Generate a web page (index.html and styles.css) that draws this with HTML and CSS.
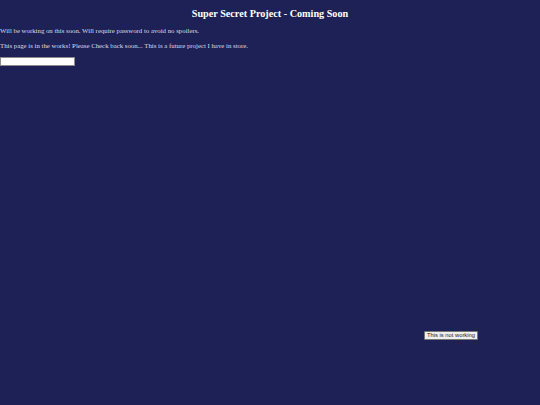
FILE: index.html
```html
<!DOCTYPE html>
<html lang="en">
<head>
<meta charset="utf-8">
<title>Super Secret Project - Coming Soon</title>
<link rel="stylesheet" href="styles.css">
</head>
<body>
<main class="page">
  <h2 class="title">Super Secret Project - Coming Soon</h2>
  <p class="text">Will be working on this soon. Will require password to avoid no spoilers.</p>
  <p class="text">This page is in the works! Please Check back soon... This is a future project I have in store.</p>
  <input class="password" type="password" aria-label="Password">
  <div class="action-row">
    <button class="action" type="button">This is not working</button>
  </div>
</main>
</body>
</html>
```
FILE: styles.css
```css
html, body {
  margin: 0;
  padding: 0;
  background: #1d2156;
}
body {
  font-family: "Liberation Serif", "Times New Roman", serif;
  color: #ffffff;
  width: 540px;
  height: 405px;
  overflow: hidden;
}
.page {
  display: flex;
  flex-direction: column;
  align-items: flex-start;
}
.title {
  align-self: stretch;
  text-align: center;
  font-size: 10.2px;
  font-weight: bold;
  margin: 8px 0 7px;
  line-height: 12px;
}
.text {
  font-size: 6.8px;
  line-height: 8px;
  margin: 0 0 6.5px;
  color: #dcdde6;
}
.password {
  box-sizing: border-box;
  width: 75px;
  height: 9px;
  margin: 1px 0 0;
  padding: 0;
  border: 1px solid #8a8a8a;
  background: #ffffff;
}
.action-row {
  align-self: stretch;
  display: flex;
  justify-content: flex-start;
  padding: 265px 0 0 424px;
}
.action {
  box-sizing: border-box;
  width: 54px;
  height: 9px;
  padding: 0;
  font-family: "Liberation Sans", Arial, sans-serif;
  font-size: 5.8px;
  line-height: 7px;
  color: #222222;
  background: #efefef;
  border: 1px solid #767676;
  border-radius: 1px;
}
```
